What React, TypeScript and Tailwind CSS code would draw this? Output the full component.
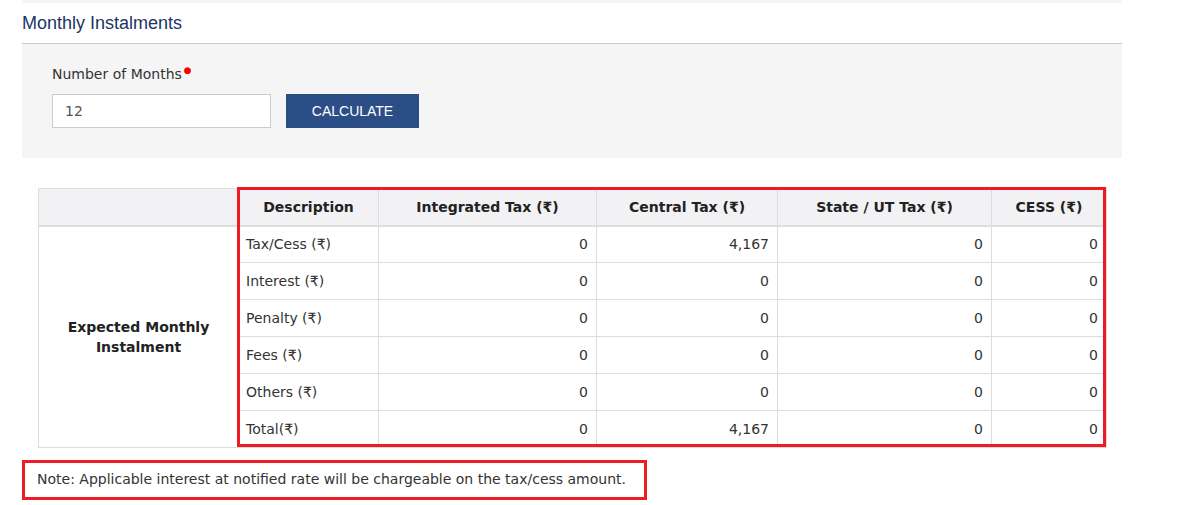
import React from "react";

const rows = [
  ["Tax/Cess (₹)", "0", "4,167", "0", "0"],
  ["Interest (₹)", "0", "0", "0", "0"],
  ["Penalty (₹)", "0", "0", "0", "0"],
  ["Fees (₹)", "0", "0", "0", "0"],
  ["Others (₹)", "0", "0", "0", "0"],
  ["Total(₹)", "0", "4,167", "0", "0"],
];

const verdana = "font-['DejaVu_Sans',Verdana,sans-serif]";

export default function App() {
  return (
    <div className="w-[1178px] h-[505px] bg-white overflow-hidden relative">
      <div className="ml-[22px] w-[1100px]">
        <div className="h-[3px] bg-[#f5f5f5]" />
        <div className="h-[41px] border-b border-[#cccccc] flex items-center">
          <h2 className="text-[18px] text-[#1c3665] font-['Liberation_Sans',Arial,sans-serif] leading-none">
            Monthly Instalments
          </h2>
        </div>
        <div className="bg-[#f5f5f5] h-[114px] pl-[30px] pt-[21px]">
          <div className={`${verdana} text-[14px] text-[#333] leading-[18px] flex`}>
            Number of Months<span className="text-[#ff0000] text-[9px] leading-[10px] ml-[2px]">●</span>
          </div>
          <div className="flex mt-[11px] gap-[15px]">
            <div className={`w-[219px] h-[34px] border border-[#cccccc] bg-white flex items-center pl-[12px] ${verdana} text-[14px] text-[#555]`}>
              12
            </div>
            <button className="w-[133px] h-[34px] bg-[#2c4e86] text-white text-[14px] font-['Liberation_Sans',Arial,sans-serif] flex items-center justify-center">
              CALCULATE
            </button>
          </div>
        </div>
      </div>

      <div className="relative ml-[38px] mt-[30px] w-[1068px]">
        <table className={`w-[1068px] table-fixed border-collapse ${verdana} text-[14px] text-[#333]`}>
          <colgroup>
            <col className="w-[200px]" />
            <col className="w-[140px]" />
            <col className="w-[218px]" />
            <col className="w-[181px]" />
            <col className="w-[214px]" />
            <col className="w-[115px]" />
          </colgroup>
          <thead>
            <tr className="h-[37px] bg-[#f2f2f4]">
              <th className="border border-[#dddddd] border-b-2"></th>
              <th className="border border-[#dddddd] border-b-2 font-bold text-[#222] pt-[1px]">Description</th>
              <th className="border border-[#dddddd] border-b-2 font-bold text-[#222] pt-[1px]">Integrated Tax (₹)</th>
              <th className="border border-[#dddddd] border-b-2 font-bold text-[#222] pt-[1px]">Central Tax (₹)</th>
              <th className="border border-[#dddddd] border-b-2 font-bold text-[#222] pt-[1px]">State / UT Tax (₹)</th>
              <th className="border border-[#dddddd] border-b-2 font-bold text-[#222] pt-[1px]">CESS (₹)</th>
            </tr>
          </thead>
          <tbody>
            {rows.map((r, i) => (
              <tr key={i} className="h-[37px]">
                {i === 0 && (
                  <td rowSpan={6} className="border border-[#dddddd] text-center font-bold text-[#222] leading-[20px] px-2">
                    Expected Monthly
                    <br />
                    Instalment
                  </td>
                )}
                <td className="border border-[#dddddd] pl-[7px]">{r[0]}</td>
                <td className="border border-[#dddddd] text-right pr-[8px]">{r[1]}</td>
                <td className="border border-[#dddddd] text-right pr-[8px]">{r[2]}</td>
                <td className="border border-[#dddddd] text-right pr-[8px]">{r[3]}</td>
                <td className="border border-[#dddddd] text-right pr-[8px]">{r[4]}</td>
              </tr>
            ))}
          </tbody>
        </table>
        <div className="absolute left-[199px] top-[-1px] w-[869px] h-[260px] border-[3px] border-[#ed1c24] pointer-events-none" />
      </div>

      <div className="ml-[22px] mt-[12px] w-[625px] h-[40px] border-[3px] border-[#ed1c24] flex items-center pl-[12px] pb-[2px]">
        <span className={`${verdana} text-[14px] text-[#333]`}>
          Note: Applicable interest at notified rate will be chargeable on the tax/cess amount.
        </span>
      </div>
    </div>
  );
}
